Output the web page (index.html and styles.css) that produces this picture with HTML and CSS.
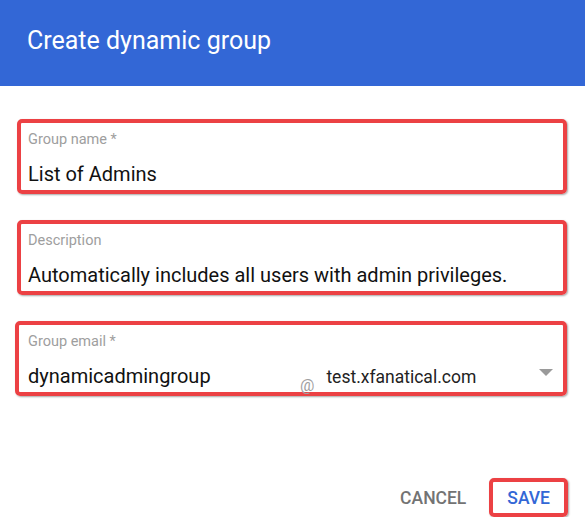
FILE: index.html
```html
<!doctype html>
<html lang="en">

    <head>
        <title>Create dynamic group</title>
        <link rel="stylesheet" href="styles.css">
    </head>

    <body>

        <div class="dlgHeader">
            <h1 class="dlgTitle">Create dynamic group</h1>
        </div>

        <div class="dlgBody">

            <div class="fldBox">
                <div class="fldLabel">Group name *</div>
                <div class="fldValue">List of Admins</div>
            </div>

            <div class="fldBox">
                <div class="fldLabel">Description</div>
                <div class="fldValue">Automatically includes all users with admin privileges.</div>
            </div>

            <div class="fldBox fldEmail">
                <div class="fldLabel">Group email *</div>
                <div class="emailRow">
                    <div class="fldValue emailLocal">dynamicadmingroup</div>
                    <span class="emailAt">@</span>
                    <div class="emailDomain">
                        <span>test.xfanatical.com</span>
                        <svg class="ddArrow" width="14" height="7" viewBox="0 0 14 7">
                            <path d="M0 0 L14 0 L7 7 Z" fill="#9a9a9a"/>
                        </svg>
                    </div>
                </div>
            </div>

        </div>

        <div class="dlgFooter">
            <div class="btnDlg btnCancel">CANCEL</div>
            <div class="btnDlg btnSave">SAVE</div>
        </div>

    </body>

</html>
```

FILE: styles.css
```css
* {
    box-sizing: border-box;
}

body {
    margin: 0;
    background: #fff;
    font-family: Roboto, "Liberation Sans", sans-serif;
}

.dlgHeader {
    background: #3367d6;
    height: 86px;
    padding: 26px 28px 0 27px;
}

.dlgTitle {
    margin: 0;
    color: #fff;
    font-size: 25px;
    font-weight: 400;
    line-height: 30px;
}

.dlgBody {
    display: flex;
    flex-direction: column;
    gap: 26px;
    padding: 33px 18px 0 17px;
}

.fldBox {
    height: 75px;
    border: 4px solid #ec4144;
    border-radius: 5px;
    box-shadow: 1px 1px 2px rgba(0, 0, 0, 0.35);
    padding: 9px 7px 4px 7px;
}

.fldEmail {
    margin-left: -2px;
    padding-left: 9px;
}

.fldLabel {
    color: #9e9e9e;
    font-size: 14.5px;
    line-height: 16px;
}

.fldValue {
    margin-top: 14px;
    color: #111;
    font-size: 20px;
    line-height: 24px;
    white-space: nowrap;
}

.emailRow {
    display: flex;
    align-items: baseline;
    margin-top: 14px;
}

.emailLocal {
    margin-top: 0;
    width: 272px;
}

.emailAt {
    align-self: flex-end;
    margin-bottom: -5px;
    color: #a0a0a0;
    font-size: 16px;
    line-height: 16px;
}

.emailDomain {
    flex: 1;
    display: flex;
    justify-content: space-between;
    align-items: baseline;
    margin-left: 12px;
    color: #222;
    font-size: 17.5px;
    line-height: 24px;
}

.ddArrow {
    align-self: flex-start;
    margin-top: 4px;
    margin-right: 3px;
}

.dlgFooter {
    display: flex;
    justify-content: flex-end;
    gap: 5px;
    margin-top: 82px;
    padding-right: 17px;
}

.btnDlg {
    height: 39px;
    padding: 6px 14px 4px 14px;
    border: 4px solid transparent;
    font-size: 17.5px;
    font-weight: 500;
    line-height: 21px;
}

.btnCancel {
    color: #737373;
}

.btnSave {
    color: #3367d6;
    border-color: #ec4144;
    border-radius: 5px;
    box-shadow: 1px 1px 2px rgba(0, 0, 0, 0.35);
}
```
